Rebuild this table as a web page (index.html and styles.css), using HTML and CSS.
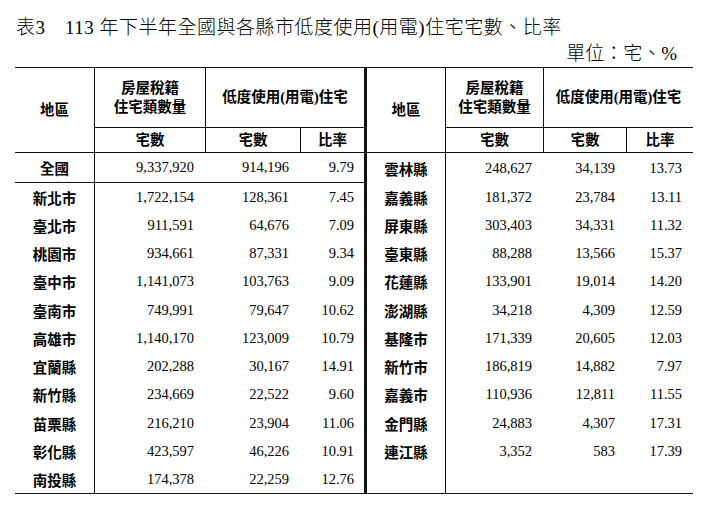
FILE: index.html
```html
<!DOCTYPE html>
<html lang="zh-Hant">
<head>
<meta charset="utf-8">
<title>表3</title>
<link rel="stylesheet" href="styles.css">
</head>
<body>
<div class="page">
  <div class="title">表3　113 年下半年全國與各縣市低度使用(用電)住宅宅數、比率</div>
  <div class="unit">單位：宅、%</div>
  <table class="tbl">
    <colgroup>
      <col class="w1"><col class="w2"><col class="w3"><col class="w4">
      <col class="w5"><col class="w6"><col class="w7"><col class="w8">
    </colgroup>
    <thead>
      <tr class="hr1">
        <th rowspan="2" class="t b r">地區</th>
        <th class="t b r lh">房屋稅籍<br>住宅類數量</th>
        <th colspan="2" class="t b thick">低度使用(用電)住宅</th>
        <th rowspan="2" class="t b r">地區</th>
        <th class="t b r lh">房屋稅籍<br>住宅類數量</th>
        <th colspan="2" class="t b">低度使用(用電)住宅</th>
      </tr>
      <tr class="hr2">
        <th class="b r">宅數</th>
        <th class="b r">宅數</th>
        <th class="b thick">比率</th>
        <th class="b r">宅數</th>
        <th class="b r">宅數</th>
        <th class="b">比率</th>
      </tr>
    </thead>
    <tbody>
      <tr class="total">
        <td class="area r b">全國</td><td class="n b">9,337,920</td><td class="n b">914,196</td><td class="n ratio-l thick b">9.79</td>
        <td class="area r">雲林縣</td><td class="n">248,627</td><td class="n">34,139</td><td class="n ratio-r">13.73</td>
      </tr>
      <tr class="row">
        <td class="area r">新北市</td><td class="n">1,722,154</td><td class="n">128,361</td><td class="n ratio-l thick">7.45</td>
        <td class="area r">嘉義縣</td><td class="n">181,372</td><td class="n">23,784</td><td class="n ratio-r">13.11</td>
      </tr>
      <tr class="row">
        <td class="area r">臺北市</td><td class="n">911,591</td><td class="n">64,676</td><td class="n ratio-l thick">7.09</td>
        <td class="area r">屏東縣</td><td class="n">303,403</td><td class="n">34,331</td><td class="n ratio-r">11.32</td>
      </tr>
      <tr class="row">
        <td class="area r">桃園市</td><td class="n">934,661</td><td class="n">87,331</td><td class="n ratio-l thick">9.34</td>
        <td class="area r">臺東縣</td><td class="n">88,288</td><td class="n">13,566</td><td class="n ratio-r">15.37</td>
      </tr>
      <tr class="row">
        <td class="area r">臺中市</td><td class="n">1,141,073</td><td class="n">103,763</td><td class="n ratio-l thick">9.09</td>
        <td class="area r">花蓮縣</td><td class="n">133,901</td><td class="n">19,014</td><td class="n ratio-r">14.20</td>
      </tr>
      <tr class="row">
        <td class="area r">臺南市</td><td class="n">749,991</td><td class="n">79,647</td><td class="n ratio-l thick">10.62</td>
        <td class="area r">澎湖縣</td><td class="n">34,218</td><td class="n">4,309</td><td class="n ratio-r">12.59</td>
      </tr>
      <tr class="row">
        <td class="area r">高雄市</td><td class="n">1,140,170</td><td class="n">123,009</td><td class="n ratio-l thick">10.79</td>
        <td class="area r">基隆市</td><td class="n">171,339</td><td class="n">20,605</td><td class="n ratio-r">12.03</td>
      </tr>
      <tr class="row">
        <td class="area r">宜蘭縣</td><td class="n">202,288</td><td class="n">30,167</td><td class="n ratio-l thick">14.91</td>
        <td class="area r">新竹市</td><td class="n">186,819</td><td class="n">14,882</td><td class="n ratio-r">7.97</td>
      </tr>
      <tr class="row">
        <td class="area r">新竹縣</td><td class="n">234,669</td><td class="n">22,522</td><td class="n ratio-l thick">9.60</td>
        <td class="area r">嘉義市</td><td class="n">110,936</td><td class="n">12,811</td><td class="n ratio-r">11.55</td>
      </tr>
      <tr class="row">
        <td class="area r">苗栗縣</td><td class="n">216,210</td><td class="n">23,904</td><td class="n ratio-l thick">11.06</td>
        <td class="area r">金門縣</td><td class="n">24,883</td><td class="n">4,307</td><td class="n ratio-r">17.31</td>
      </tr>
      <tr class="row">
        <td class="area r">彰化縣</td><td class="n">423,597</td><td class="n">46,226</td><td class="n ratio-l thick">10.91</td>
        <td class="area r">連江縣</td><td class="n">3,352</td><td class="n">583</td><td class="n ratio-r">17.39</td>
      </tr>
      <tr class="row last">
        <td class="area r b">南投縣</td><td class="n b">174,378</td><td class="n b">22,259</td><td class="n ratio-l thick b">12.76</td>
        <td class="area r b"></td><td class="n b"></td><td class="n b"></td><td class="n ratio-r b"></td>
      </tr>
    </tbody>
  </table>
</div>
</body>
</html>
```
FILE: styles.css
```css
html, body {
  margin: 0;
  padding: 0;
  background: #fff;
}
body {
  font-family: "Liberation Serif", "Noto Sans CJK TC", serif;
  color: #000;
}
.page {
  width: 714px;
  height: 512px;
  padding: 16px 21px 0 15px;
  box-sizing: border-box;
}
.title {
  font-size: 19px;
  line-height: 24px;
  height: 24px;
  padding-left: 1px;
  white-space: nowrap;
  letter-spacing: 0.5px;
  font-weight: 300;
}
.unit {
  font-size: 19px;
  line-height: 24px;
  height: 24px;
  margin-top: 2px;
  text-align: right;
  padding-right: 16px;
  font-weight: 300;
}
.tbl {
  margin-top: 1px;
  width: 678px;
  table-layout: fixed;
  border-collapse: separate;
  border-spacing: 0;
  font-size: 14.5px;
}
.w1 { width: 80px; }
.w2 { width: 111px; }
.w3 { width: 95px; }
.w4 { width: 66px; }
.w5 { width: 79px; }
.w6 { width: 98px; }
.w7 { width: 83px; }
.w8 { width: 66px; }
.tbl th, .tbl td {
  padding: 0;
  box-sizing: border-box;
  vertical-align: middle;
}
.tbl th {
  font-weight: 700;
  text-align: center;
  line-height: 19px;
}
.hr1 { height: 61px; }
.hr2 { height: 25px; }
.total { height: 30px; }
.row { height: 28.27px; }
.t { border-top: 1px solid #111; }
.b { border-bottom: 1px solid #111; }
.r { border-right: 1px solid #111; }
.thick { border-right: 3px solid #111; }
.area {
  font-weight: 700;
  text-align: center;
  font-family: "Noto Sans CJK TC", sans-serif;
}
.n {
  text-align: right;
  padding-right: 12px !important;
  white-space: nowrap;
}
.ratio-l { padding-right: 10px !important; }
.ratio-r { padding-right: 11px !important; }
```
